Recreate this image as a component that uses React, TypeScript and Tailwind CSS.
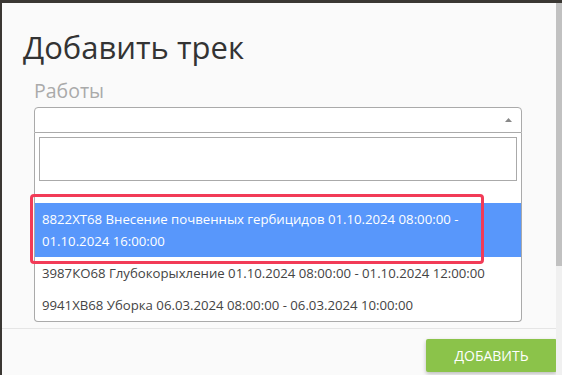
import React from 'react';

const options = [
  '8822XT68 Внесение почвенных гербицидов 01.10.2024 08:00:00 - 01.10.2024 16:00:00',
  '3987КО68 Глубокорыхление 01.10.2024 08:00:00 - 01.10.2024 12:00:00',
  '9941ХВ68 Уборка 06.03.2024 08:00:00 - 06.03.2024 10:00:00',
];

const App: React.FC = () => {
  return (
    <div
      className="relative flex h-[375px] w-[562px] overflow-hidden bg-[#3a3733] pl-[2px] pt-[3px]"
      style={{ fontFamily: '"Open Sans", "Noto Sans", sans-serif' }}
    >
      <div className="flex flex-1 flex-col bg-[#fafafa]">
        {/* Header */}
        <div className="pl-[21px] pt-[26px]">
          <h2 className="text-[31px] leading-[36px] font-normal text-[#333]">Добавить трек</h2>
        </div>

        {/* Body */}
        <div className="pl-[32px] pr-[40px] pt-[13px]">
          <div className="text-[19.5px] leading-[26px] text-[#aaa]">Работы</div>
          <div className="relative mt-[3px] h-[26px] rounded-t-[4px] border border-[#aaa] bg-white">
            <svg className="absolute right-[9px] top-[10px]" width="7" height="4" viewBox="0 0 7 4">
              <path d="M0 4 L3.5 0 L7 4 Z" fill="#888" />
            </svg>
          </div>
          <div className="h-[189px] rounded-b-[4px] border border-t-0 border-[#aaa] bg-white">
            <div className="px-[4px] pt-[4px]">
              <div className="h-[44px] border border-[#aaa] bg-white" />
            </div>
            <ul className="mt-[22px] text-[13.2px] leading-[22px]">
              {options.map((o, i) => (
                <li
                  key={o}
                  className={
                    i === 0
                      ? 'relative bg-[#5897fb] py-[5px] pl-[7px] pr-[20px] text-white'
                      : 'py-[5px] pl-[7px] pr-[20px] text-[#444]'
                  }
                >
                  {o}
                  {i === 0 && (
                    <div className="pointer-events-none absolute left-[-5px] top-[-9px] h-[70px] w-[454px] rounded-[4px] border-[3px] border-[#f23b57]" />
                  )}
                </li>
              ))}
            </ul>
          </div>
        </div>

        {/* Footer */}
        <div className="mt-[6px] flex flex-1 justify-end border-t border-[#e5e5e5] pr-[5px] pt-[10px]">
          <button className="h-[33px] w-[131px] rounded-[2px] bg-[#8bc34a] text-[14px] font-medium uppercase text-white shadow-[0_2px_4px_rgba(0,0,0,0.25)]">
            Добавить
          </button>
        </div>
      </div>

      {/* window scrollbar */}
      <div className="absolute right-0 top-[3px] flex h-[372px] w-[6px] flex-col">
        <div className="h-[263px] bg-[#c1c1c1]" />
        <div className="flex-1 bg-[#f0f0f0]" />
      </div>
    </div>
  );
};

export default App;
